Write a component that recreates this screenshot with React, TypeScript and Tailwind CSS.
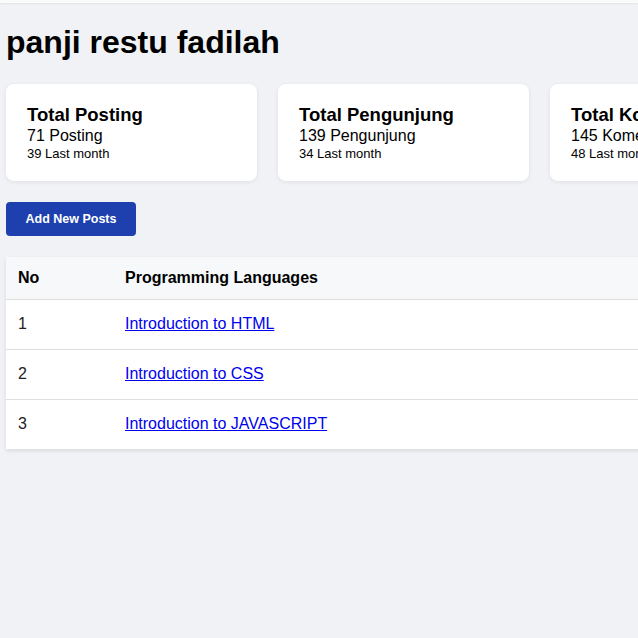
import React from 'react';

const stats = [
  { title: 'Total Posting', value: '71 Posting', last: '39 Last month' },
  { title: 'Total Pengunjung', value: '139 Pengunjung', last: '34 Last month' },
  { title: 'Total Komentar', value: '145 Komentar', last: '48 Last month' },
];

const posts = [
  { no: 1, title: 'Introduction to HTML' },
  { no: 2, title: 'Introduction to CSS' },
  { no: 3, title: 'Introduction to JAVASCRIPT' },
];

export default function App() {
  return (
    <div className="min-h-screen w-full overflow-hidden bg-[#f0f2f5] text-black font-['Liberation_Sans',Arial,sans-serif]">
      {/* top bar, mostly out of view */}
      <div className="h-[3px] w-full bg-[#fafafa] shadow-[0_1px_2px_rgba(0,0,0,0.06)]" />

      <div className="px-[6px]">
        <h1 className="mt-[21px] mb-[23px] text-[32px] leading-[37px] font-bold">panji restu fadilah</h1>

        {/* stat cards */}
        <div className="flex gap-[21px] w-max">
          {stats.map(s => (
            <div
              key={s.title}
              className="w-[251px] h-[97px] shrink-0 rounded-[8px] bg-white px-[21px] pt-[20px] shadow-[0_1px_4px_rgba(0,0,0,0.08)]"
            >
              <div className="text-[18.5px] leading-[21px] font-bold">{s.title}</div>
              <div className="text-[16px] leading-[19px] mt-[1px]">{s.value}</div>
              <div className="text-[13px] leading-[15px] mt-[1px]">{s.last}</div>
            </div>
          ))}
        </div>

        <button className="mt-[21px] h-[34px] w-[130px] rounded-[4px] bg-[#1e40af] text-white text-[12.5px] font-bold">
          Add New Posts
        </button>

        {/* posts table */}
        <table className="mt-[21px] w-[900px] border-collapse bg-white text-[16px] shadow-[0_2px_4px_rgba(0,0,0,0.1)]">
          <thead>
            <tr className="h-[42px] bg-[#f7f8fa] border-b border-[#dedede]">
              <th className="w-[119px] pl-[12px] text-left font-bold">No</th>
              <th className="text-left font-bold">Programming Languages</th>
            </tr>
          </thead>
          <tbody>
            {posts.map((p, i) => (
              <tr key={p.no} className={`h-[50px] ${i < posts.length - 1 ? 'border-b border-[#dedede]' : ''}`}>
                <td className="pl-[12px] text-[#222]">{p.no}</td>
                <td>
                  <a href="#" className="text-[#0000ee] underline">{p.title}</a>
                </td>
              </tr>
            ))}
          </tbody>
        </table>
      </div>
    </div>
  );
}
